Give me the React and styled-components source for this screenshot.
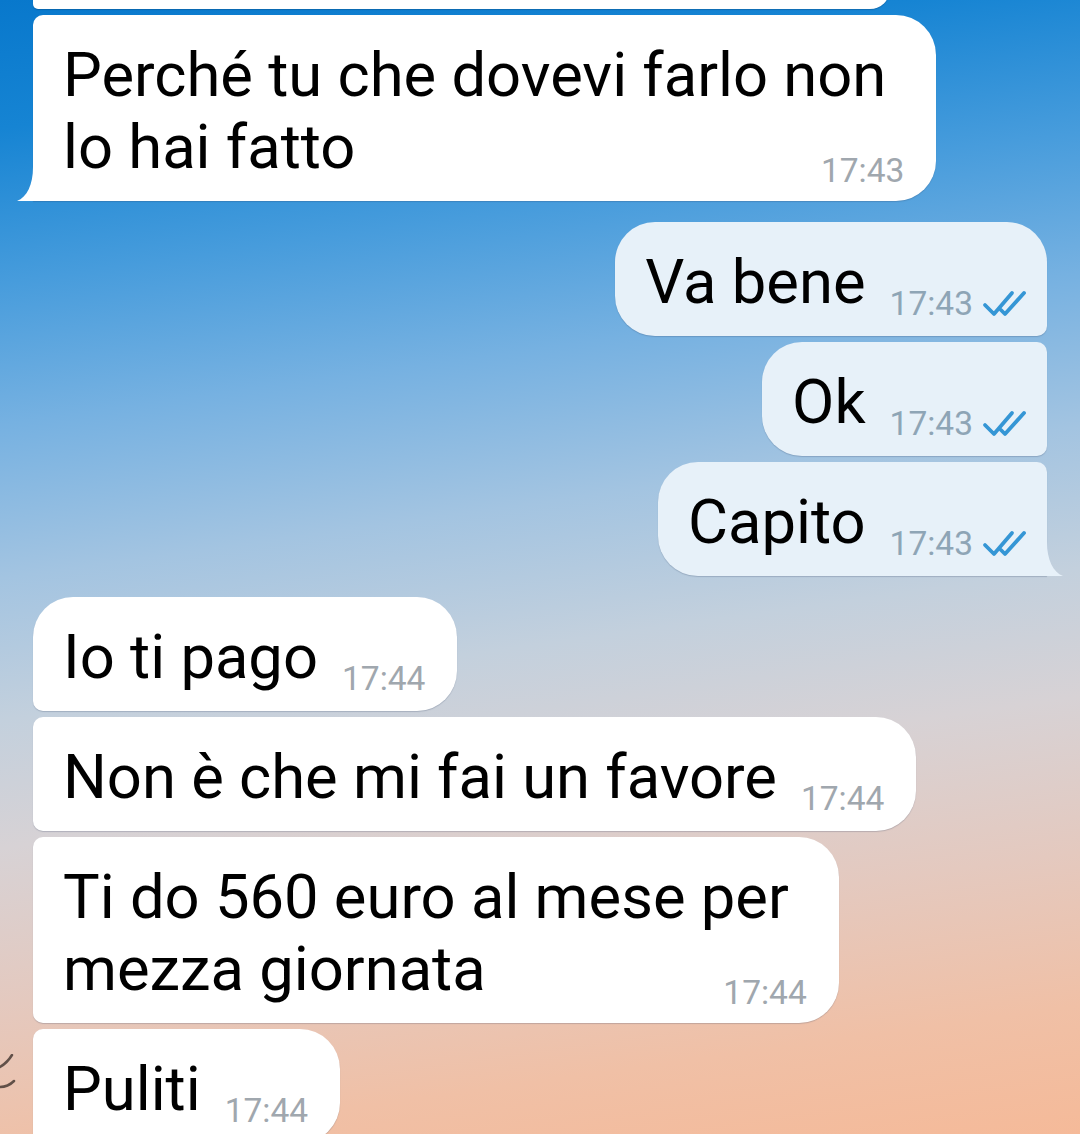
import React from 'react'
import styled, { createGlobalStyle } from 'styled-components'

const GlobalStyle = createGlobalStyle`
  html, body {
    margin: 0;
    padding: 0;
  }
  body {
    font-family: Roboto, 'Noto Sans', sans-serif;
    -webkit-font-smoothing: antialiased;
  }
`

const messages = [
  { id: 1, out: false, lines: ['Perché tu che dovevi farlo non', 'lo hai fatto'], time: '17:43', pos: 'last' },
  { id: 2, out: true, lines: ['Va bene'], time: '17:43', pos: 'first' },
  { id: 3, out: true, lines: ['Ok'], time: '17:43', pos: 'middle' },
  { id: 4, out: true, lines: ['Capito'], time: '17:43', pos: 'last' },
  { id: 5, out: false, lines: ['Io ti pago'], time: '17:44', pos: 'first' },
  { id: 6, out: false, lines: ['Non è che mi fai un favore'], time: '17:44', pos: 'middle' },
  { id: 7, out: false, lines: ['Ti do 560 euro al mese per', 'mezza giornata'], time: '17:44', pos: 'middle' },
  { id: 8, out: false, lines: ['Puliti'], time: '17:44', pos: 'middle' },
]

function DoubleCheck() {
  return (
    <CheckIcon viewBox='0 0 48 28' width='48' height='28'>
      <path d='M3 16 L12 25 L30 4' />
      <path d='M19 21 L23 25 L42 4' />
    </CheckIcon>
  )
}

function Tail({ out }) {
  return (
    <TailSvg out={out ? 1 : 0} viewBox='0 0 20 34' width='20' height='34'>
      {out ? (
        <path d='M0 0 L4 0 C4 18 10 30 20 34 L0 34 Z' />
      ) : (
        <path d='M20 0 L16 0 C16 18 10 30 0 34 L20 34 Z' />
      )}
    </TailSvg>
  )
}

function Message({ msg }) {
  const { out, lines, time, pos } = msg
  const head = lines.slice(0, -1)
  const last = lines[lines.length - 1]
  return (
    <Row out={out ? 1 : 0} gap={pos === 'first' ? 21 : 6}>
      <Bubble out={out ? 1 : 0} pos={pos}>
        {head.map((l) => (
          <HeadLine key={l}>{l}</HeadLine>
        ))}
        <LastLine>
          <Line>{last}</Line>
          <Meta multi={head.length ? 1 : 0}>
            <Time out={out ? 1 : 0}>{time}</Time>
            {out && <DoubleCheck />}
          </Meta>
        </LastLine>
        {pos === 'last' && <Tail out={out} />}
      </Bubble>
    </Row>
  )
}

export default function App() {
  return (
    <>
      <GlobalStyle />
      <Screen>
        <Bird viewBox='0 0 16 44' width='16' height='44'>
          <path d='M0 13 C5 10 9 6 12 1' />
          <path d='M0 33 C5 33 10 31 14 27' />
        </Bird>
        <Chat>
          <Row out={0} gap={0}>
            <ClippedBubble />
          </Row>
          {messages.map((m) => (
            <Message key={m.id} msg={m} />
          ))}
        </Chat>
      </Screen>
    </>
  )
}

const Screen = styled.div`
  position: relative;
  width: 1080px;
  height: 1134px;
  overflow: hidden;
  background: linear-gradient(
    172deg,
    #0878cc 0%,
    #1684d3 10%,
    #479cdc 22%,
    #76b1e1 33%,
    #a3c4e1 45%,
    #c3d0dd 56%,
    #d7d2d5 66%,
    #e4c9bf 78%,
    #f0c0a6 90%,
    #f5ba99 100%
  );
`

const Bird = styled.svg`
  position: absolute;
  left: 0;
  top: 1054px;
  fill: none;
  stroke: #4a3c36;
  stroke-width: 2.5;
  stroke-linecap: round;
  opacity: 0.85;
`

const Chat = styled.div`
  display: flex;
  flex-direction: column;
  padding: 0 33px;
`

const Row = styled.div`
  display: flex;
  justify-content: ${({ out }) => (out ? 'flex-end' : 'flex-start')};
  margin-top: ${({ gap }) => gap}px;
`

const ClippedBubble = styled.div`
  width: 857px;
  height: 40px;
  margin-top: -31px;
  background: #ffffff;
  border-radius: 10px 40px 40px 10px;
  box-shadow: 0 1px 1px rgba(0, 40, 80, 0.25);
`

const radiusFor = (out, pos) => {
  const big = 40
  const small = 10
  const first = pos === 'first' ? big : small
  const bottom = pos === 'last' ? 0 : small
  if (out) return `${big}px ${first}px ${bottom}px ${big}px`
  return `${first}px ${big}px ${big}px ${bottom}px`
}

const Bubble = styled.div`
  position: relative;
  display: flex;
  flex-direction: column;
  padding: 24px ${({ out }) => (out ? '17px' : '32px')} 18px 30px;
  background: ${({ out }) => (out ? '#e7f1f9' : '#ffffff')};
  border-radius: ${({ out, pos }) => radiusFor(out, pos)};
  box-shadow: 0 1px 1px rgba(40, 60, 90, 0.22);
  color: #000;
`

const Line = styled.div`
  font-size: 61.5px;
  line-height: 72px;
  white-space: nowrap;
`

const HeadLine = styled(Line)`
  padding-right: 18px;
`

const LastLine = styled.div`
  display: flex;
  align-items: flex-end;
  justify-content: space-between;
`

const Meta = styled.div`
  display: flex;
  align-items: flex-end;
  margin-left: 24px;
  margin-bottom: ${({ multi }) => (multi ? '-5px' : '-3px')};
`

const Time = styled.span`
  font-size: 33.5px;
  line-height: 34px;
  color: ${({ out }) => (out ? '#8ea5b6' : '#a0a7ae')};
`

const CheckIcon = styled.svg`
  margin-left: 9px;
  margin-bottom: 4px;
  fill: none;
  stroke: #3596d5;
  stroke-width: 3.8;
  stroke-linecap: round;
  stroke-linejoin: round;
`

const TailSvg = styled.svg`
  position: absolute;
  bottom: 0;
  ${({ out }) => (out ? 'right: -16px;' : 'left: -16px;')}
  fill: ${({ out }) => (out ? '#e7f1f9' : '#ffffff')};
`
